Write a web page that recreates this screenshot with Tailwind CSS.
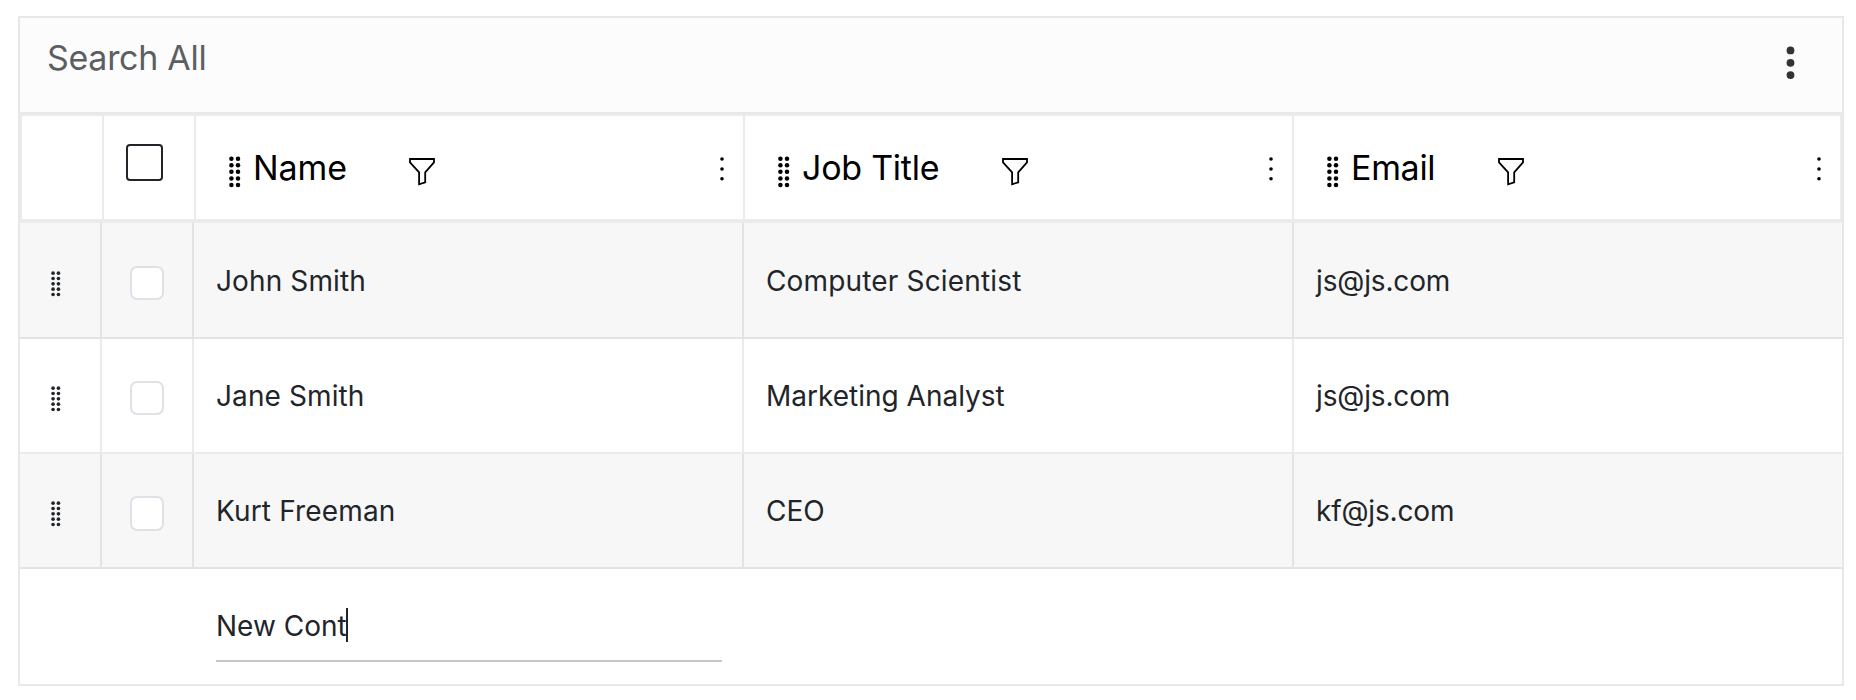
<!DOCTYPE html>
<html lang="en">
<head>
<meta charset="utf-8">
<title>Contacts</title>
<script src="https://cdn.jsdelivr.net/npm/@tailwindcss/browser@4"></script>
</head>
<body class="h-[700px] overflow-hidden bg-white pt-4 pl-[18px] font-['Inter',sans-serif] text-[28px] text-[#212529]">
<svg class="hidden">
  <symbol id="grip" viewBox="0 0 12 32"><circle cx="2.4" cy="2.7" r="2.25"/><circle cx="9" cy="2.7" r="2.25"/><circle cx="2.4" cy="9.2" r="2.25"/><circle cx="9" cy="9.2" r="2.25"/><circle cx="2.4" cy="15.8" r="2.25"/><circle cx="9" cy="15.8" r="2.25"/><circle cx="2.4" cy="22.4" r="2.25"/><circle cx="9" cy="22.4" r="2.25"/><circle cx="2.4" cy="28.9" r="2.25"/><circle cx="9" cy="28.9" r="2.25"/></symbol>
  <symbol id="funnel" viewBox="0 0 26 28"><path d="M1 1H25V4.3L16.2 14.3V24.3L10.1 26.3V14.3L1 4.3Z" fill="none" stroke="#000" stroke-width="1.8"/></symbol>
  <symbol id="dots" viewBox="0 0 4 24"><circle cx="2" cy="2" r="1.8"/><circle cx="2" cy="12" r="1.8"/><circle cx="2" cy="21.8" r="1.8"/></symbol>
</svg>
<div class="w-[1826px] border-2 border-[#e8e8e8]">
  <div class="flex h-24 items-start justify-between border-b-2 border-[#e8e8e8] bg-[#fcfcfc] pr-[47.5px] pl-[27px]">
    <span class="pt-[18px] text-[34px] leading-[44px] tracking-[-0.3px] text-[#5c5f62]">Search All</span>
    <svg class="mt-7 h-[34px] w-[9px]" viewBox="0 0 9 34" fill="#333"><circle cx="4.5" cy="4.4" r="3.9"/><circle cx="4.5" cy="16.8" r="3.9"/><circle cx="4.5" cy="29.1" r="3.9"/></svg>
  </div>
  <div class="flex h-[109px] border-2 border-b-4 border-[#ebebeb] text-[34px] leading-[44px] text-black">
    <div class="w-[82px] border-r-2 border-[#ebebeb]"></div>
    <div class="w-[92px] border-r-2 border-[#ebebeb] pt-7 pl-[22px]"><div class="size-[37px] rounded-[4px] border-2 border-[#212529]"></div></div>
    <div class="flex w-[549px] items-start border-r-2 border-[#ebebeb] pt-[30px] pr-[19.5px] pl-[33px]">
      <svg class="mt-[10px] mr-3 h-8 w-3"><use href="#grip"/></svg>
      <span class="w-[156px] whitespace-nowrap tracking-[-0.1px]">Name</span>
      <svg class="mt-3 h-7 w-[26px]"><use href="#funnel"/></svg>
      <svg class="mt-[10.5px] ml-auto h-6 w-1"><use href="#dots"/></svg>
    </div>
    <div class="flex w-[549px] items-start border-r-2 border-[#ebebeb] pt-[30px] pr-[19.5px] pl-[33px]">
      <svg class="mt-[10px] mr-3 h-8 w-3"><use href="#grip"/></svg>
      <span class="w-[199.5px] whitespace-nowrap tracking-[-0.25px]">Job Title</span>
      <svg class="mt-3 h-7 w-[26px]"><use href="#funnel"/></svg>
      <svg class="mt-[10.5px] ml-auto h-6 w-1"><use href="#dots"/></svg>
    </div>
    <div class="flex w-[546px] items-start pt-[30px] pr-[19px] pl-[33px]">
      <svg class="mt-[10px] mr-3 h-8 w-3"><use href="#grip"/></svg>
      <span class="w-[146.5px] whitespace-nowrap tracking-[-0.3px]">Email</span>
      <svg class="mt-3 h-7 w-[26px]"><use href="#funnel"/></svg>
      <svg class="mt-[10.5px] ml-auto h-6 w-1"><use href="#dots"/></svg>
    </div>
  </div>
  <div class="flex h-[116px] border-b-2 border-[#e3e3e3] bg-[#f7f7f7] leading-10">
    <div class="w-[82px] border-r-2 border-[#e3e3e3] pt-12 pl-[30.5px]"><svg class="h-[26px] w-[10px] fill-[#212529]"><use href="#grip"/></svg></div>
    <div class="w-[92px] border-r-2 border-[#e3e3e3] pt-[43px] pl-7"><div class="size-[34px] rounded-[7px] border-2 border-[#dee2e6] bg-white"></div></div>
    <div class="w-[550px] border-r-2 border-[#e3e3e3] pt-[38px] pl-[22px]"><span class="tracking-[0.12px]">John Smith</span></div>
    <div class="w-[550px] border-r-2 border-[#e3e3e3] pt-[38px] pl-[22px]"><span class="tracking-[0.16px]">Computer Scientist</span></div>
    <div class="w-[548px] pt-[38px] pl-[22px]"><span class="tracking-[-0.15px]">js@js.com</span></div>
  </div>
  <div class="flex h-[115px] border-b-2 border-[#ebebeb] bg-white leading-10">
    <div class="w-[82px] border-r-2 border-[#ebebeb] pt-[47px] pl-[30.5px]"><svg class="h-[26px] w-[10px] fill-[#212529]"><use href="#grip"/></svg></div>
    <div class="w-[92px] border-r-2 border-[#ebebeb] pt-[42px] pl-7"><div class="size-[34px] rounded-[7px] border-2 border-[#dee2e6] bg-white"></div></div>
    <div class="w-[550px] border-r-2 border-[#ebebeb] pt-[37px] pl-[22px]"><span class="tracking-[0.1px]">Jane Smith</span></div>
    <div class="w-[550px] border-r-2 border-[#ebebeb] pt-[37px] pl-[22px]"><span>Marketing Analyst</span></div>
    <div class="w-[548px] pt-[37px] pl-[22px]"><span class="tracking-[-0.15px]">js@js.com</span></div>
  </div>
  <div class="flex h-[115px] border-b-2 border-[#e3e3e3] bg-[#f7f7f7] leading-10">
    <div class="w-[82px] border-r-2 border-[#e3e3e3] pt-[47px] pl-[30.5px]"><svg class="h-[26px] w-[10px] fill-[#212529]"><use href="#grip"/></svg></div>
    <div class="w-[92px] border-r-2 border-[#e3e3e3] pt-[42px] pl-7"><div class="h-[35px] w-[34px] rounded-[7px] border-2 border-[#dee2e6] bg-white"></div></div>
    <div class="w-[550px] border-r-2 border-[#e3e3e3] pt-[37px] pl-[22px]"><span class="tracking-[0.15px]">Kurt Freeman</span></div>
    <div class="w-[550px] border-r-2 border-[#e3e3e3] pt-[37px] pl-[22px]"><span>CEO</span></div>
    <div class="w-[548px] pt-[37px] pl-[22px]"><span class="tracking-[-0.15px]">kf@js.com</span></div>
  </div>
  <div class="h-[115px] bg-white pt-[37px] pl-[196px] leading-10">
    <div class="flex h-14 w-[506px] items-start border-b-2 border-[#c8c8c8]">
      <span class="w-[130px] whitespace-nowrap">New Cont</span>
      <span class="mt-[2px] h-[34px] w-[2px] bg-[#212529]"></span>
    </div>
  </div>
</div>
</body>
</html>
